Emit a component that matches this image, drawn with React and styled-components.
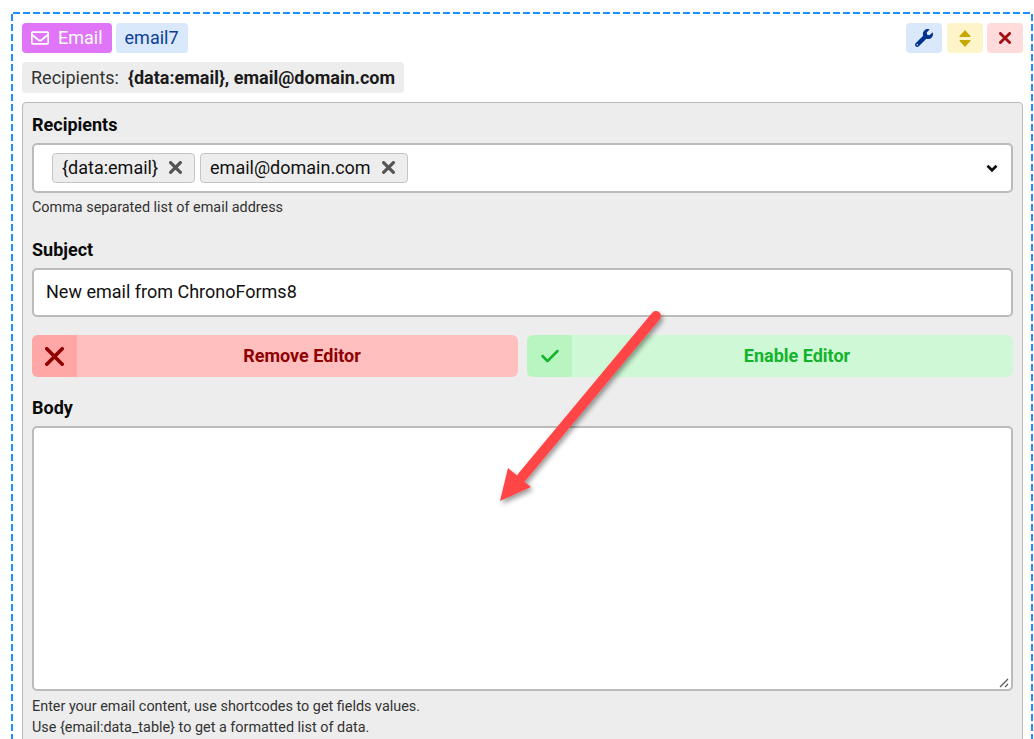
import React from 'react';
import styled, { createGlobalStyle } from 'styled-components';
import { FaRegEnvelope, FaWrench } from 'react-icons/fa';
import { FaCheck } from 'react-icons/fa6';

const Global = createGlobalStyle`
    html, body {
        margin: 0;
        height: 739px;
        overflow: hidden;
        background: #fff;
    }
    body {
        font-family: Roboto, "Liberation Sans", sans-serif;
        font-size: 18px;
        color: #111;
    }
`;

const Page = styled.div`
    position: relative;
    height: 739px;
    overflow: hidden;
    padding: 12px 1px 0 11px;
    box-sizing: border-box;
`;
const Frame = styled.div`
    padding: 11px 10px 0 11px;
    height: 800px;
    box-sizing: border-box;
    background-image:
        linear-gradient(90deg, #1e90ff 7px, transparent 7px),
        linear-gradient(180deg, #1e90ff 7px, transparent 7px),
        linear-gradient(180deg, #1e90ff 7px, transparent 7px);
    background-size: 10px 2px, 2px 10px, 2px 10px;
    background-position: 2px 0, 0 2px, right 2px;
    background-repeat: repeat-x, repeat-y, repeat-y;
`;
const TopRow = styled.div`
    display: flex;
    justify-content: space-between;
`;
const Badges = styled.div`
    display: flex;
    gap: 4px;
`;
const Badge = styled.div`
    height: 30px;
    box-sizing: border-box;
    display: flex;
    align-items: center;
    gap: 9px;
    padding: 0 9px 1px;
    border-radius: 4px;
    color: ${p => p.$color};
    background: ${p => p.$bg};
`;
const Actions = styled.div`
    display: flex;
    gap: 4.5px;
`;
const ActionButton = styled.div`
    width: 36px;
    height: 30px;
    border-radius: 4px;
    display: flex;
    align-items: center;
    justify-content: center;
    color: ${p => p.$color};
    background: ${p => p.$bg};
`;
const Summary = styled.div`
    display: inline-flex;
    gap: 9px;
    margin-top: 9px;
    height: 31px;
    align-items: center;
    padding: 0 9px 1px;
    box-sizing: border-box;
    border-radius: 4px;
    background: #ededed;
    color: #333;
    b {
        font-weight: 700;
        color: #1a1a1a;
    }
`;
const Panel = styled.div`
    margin-top: 9px;
    border: 1px solid #bbb;
    border-radius: 4px;
    background: #ededed;
    padding: 9px 9px 0;
    height: 700px;
`;
const Label = styled.div`
    font-weight: 700;
    line-height: 26px;
    color: #0a0a0a;
    margin-top: ${p => p.$top || 0}px;
    margin-bottom: 5px;
`;
const TagInput = styled.div`
    height: 50px;
    box-sizing: border-box;
    border: 2px solid #bbb;
    border-radius: 5px;
    background: #fff;
    display: flex;
    align-items: center;
    gap: 5px;
    padding: 0 13px 0 18px;
`;
const Tag = styled.div`
    height: 30px;
    box-sizing: border-box;
    display: flex;
    align-items: center;
    gap: 11px;
    padding: 0 12px 1px 9px;
    border: 1px solid #c4c4c4;
    border-radius: 4px;
    background: #ededed;
    color: #555;
    span {
        color: #111;
    }
`;
const Caret = styled.svg`
    margin-left: auto;
    color: #111;
`;
const Help = styled.div`
    font-size: 14.4px;
    line-height: 21px;
    color: #333;
    margin-top: ${p => p.$top || 0}px;
`;
const TextInput = styled.div`
    height: 49px;
    box-sizing: border-box;
    border: 2px solid #bbb;
    border-radius: 5px;
    background: #fff;
    padding: 0 12px 2px;
    display: flex;
    align-items: center;
`;
const ButtonRow = styled.div`
    display: grid;
    grid-template-columns: 1fr 1fr;
    gap: 9px;
    margin-top: 18px;
`;
const EditorButton = styled.div`
    height: 42px;
    display: flex;
    border-radius: 6px;
    overflow: hidden;
    background: ${p => p.$bg};
    color: ${p => p.$color};
    font-weight: 700;
`;
const ButtonIcon = styled.div`
    width: 45px;
    display: flex;
    align-items: center;
    justify-content: center;
    background: ${p => p.$bg};
    font-size: 20px;
`;
const ButtonText = styled.div`
    flex: 1;
    display: flex;
    align-items: center;
    justify-content: center;
    padding: 0 0 1px 9px;
`;
const TextArea = styled.div`
    position: relative;
    height: 265px;
    box-sizing: border-box;
    border: 2px solid #bbb;
    border-radius: 5px;
    background: #fff;
`;
const Grip = styled.svg`
    position: absolute;
    right: 1px;
    bottom: 1px;
`;
const Arrow = styled.svg`
    position: absolute;
    left: 0;
    top: 0;
    pointer-events: none;
`;

const CloseIcon = ({ size, weight }) => (
    <svg width={size} height={size} viewBox={`0 0 ${size} ${size}`}>
        <path
            d={`M${weight / 2} ${weight / 2} L${size - weight / 2} ${size - weight / 2} M${size - weight / 2} ${weight / 2} L${weight / 2} ${size - weight / 2}`}
            stroke="currentColor"
            strokeWidth={weight}
            strokeLinecap="round"
            fill="none"
        />
    </svg>
);

const SortIcon = () => (
    <svg width="12" height="17" viewBox="0 0 12 17" fill="currentColor" stroke="currentColor" strokeWidth="1.2" strokeLinejoin="round">
        <polygon points="6,1 11,6.4 1,6.4" />
        <polygon points="6,16 11,10.6 1,10.6" />
    </svg>
);

const App = () => {
    return (
        <Page>
            <Global />
            <Frame>
                <TopRow>
                    <Badges>
                        <Badge $bg="#e076f7" $color="#fff"><FaRegEnvelope />Email</Badge>
                        <Badge $bg="#dae8fc" $color="#0b3f92">email7</Badge>
                    </Badges>
                    <Actions>
                        <ActionButton $bg="#dae8fc" $color="#00338d"><FaWrench size={18} /></ActionButton>
                        <ActionButton $bg="#fdf5c9" $color="#c7a800"><SortIcon /></ActionButton>
                        <ActionButton $bg="#ffdbdb" $color="#a30d11"><CloseIcon size={12} weight={2.8} /></ActionButton>
                    </Actions>
                </TopRow>
                <Summary>Recipients: <b>{'{data:email}, email@domain.com'}</b></Summary>
                <Panel>
                    <Label>Recipients</Label>
                    <TagInput>
                        <Tag><span>{'{data:email}'}</span><CloseIcon size={13} weight={3.2} /></Tag>
                        <Tag><span>email@domain.com</span><CloseIcon size={13} weight={3.2} /></Tag>
                        <Caret width="12" height="9" viewBox="0 0 12 9">
                            <path d="M1.5 1.8 L6 6.3 L10.5 1.8" stroke="currentColor" strokeWidth="2.8" fill="none" />
                        </Caret>
                    </TagInput>
                    <Help $top={4}>Comma separated list of email address</Help>
                    <Label $top={19}>Subject</Label>
                    <TextInput>New email from ChronoForms8</TextInput>
                    <ButtonRow>
                        <EditorButton $bg="#ffbfbf" $color="#8f0000">
                            <ButtonIcon $bg="#ffa6a6"><CloseIcon size={19} weight={3.6} /></ButtonIcon>
                            <ButtonText>Remove Editor</ButtonText>
                        </EditorButton>
                        <EditorButton $bg="#cff8d6" $color="#12b42b">
                            <ButtonIcon $bg="#b8f5c0"><FaCheck /></ButtonIcon>
                            <ButtonText>Enable Editor</ButtonText>
                        </EditorButton>
                    </ButtonRow>
                    <Label $top={18}>Body</Label>
                    <TextArea>
                        <Grip width="12" height="12" viewBox="0 0 12 12">
                            <path d="M2 11 L10 3 M7 11 L10 8" stroke="#555" strokeWidth="1.2" fill="none" />
                        </Grip>
                    </TextArea>
                    <Help $top={5}>Enter your email content, use shortcodes to get fields values.<br />Use {'{email:data_table}'} to get a formatted list of data.</Help>
                </Panel>
            </Frame>
            <Arrow width="1034" height="739" viewBox="0 0 1034 739">
                <defs>
                    <filter id="arrowShadow" x="-20%" y="-20%" width="140%" height="140%">
                        <feDropShadow dx="2" dy="3" stdDeviation="2.5" floodColor="#000" floodOpacity="0.4" />
                    </filter>
                </defs>
                <g filter="url(#arrowShadow)" fill="#ff4545" stroke="none">
                    <line x1="656" y1="316" x2="522" y2="477" stroke="#ff4545" strokeWidth="10" strokeLinecap="round" />
                    <polygon points="500,501 508,468 531,487" />
                </g>
            </Arrow>
        </Page>
    );
};

export default App;
